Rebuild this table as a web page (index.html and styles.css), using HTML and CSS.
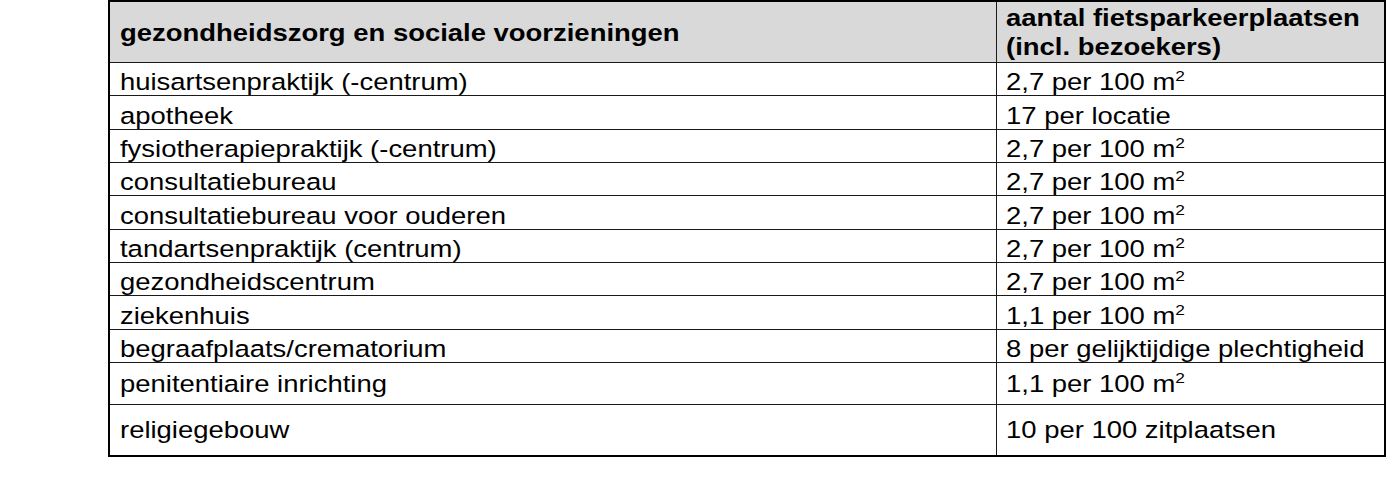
FILE: index.html
```html
<!DOCTYPE html>
<html lang="nl">
<head>
<meta charset="utf-8">
<title>Fietsparkeerplaatsen</title>
<link rel="stylesheet" href="styles.css">
</head>
<body>
<table class="norm">
  <thead>
    <tr class="head">
      <th class="c1"><span class="t">gezondheidszorg en sociale voorzieningen</span></th>
      <th class="c2"><span class="t">aantal fietsparkeerplaatsen<br>(incl. bezoekers)</span></th>
    </tr>
  </thead>
  <tbody>
    <tr class="row"><td><span class="t">huisartsenpraktijk (-centrum)</span></td><td><span class="t">2,7 per 100 m<sup>2</sup></span></td></tr>
    <tr class="row"><td><span class="t">apotheek</span></td><td><span class="t">17 per locatie</span></td></tr>
    <tr class="row"><td><span class="t">fysiotherapiepraktijk (-centrum)</span></td><td><span class="t">2,7 per 100 m<sup>2</sup></span></td></tr>
    <tr class="row"><td><span class="t">consultatiebureau</span></td><td><span class="t">2,7 per 100 m<sup>2</sup></span></td></tr>
    <tr class="row"><td><span class="t">consultatiebureau voor ouderen</span></td><td><span class="t">2,7 per 100 m<sup>2</sup></span></td></tr>
    <tr class="row"><td><span class="t">tandartsenpraktijk (centrum)</span></td><td><span class="t">2,7 per 100 m<sup>2</sup></span></td></tr>
    <tr class="row"><td><span class="t">gezondheidscentrum</span></td><td><span class="t">2,7 per 100 m<sup>2</sup></span></td></tr>
    <tr class="row"><td><span class="t">ziekenhuis</span></td><td><span class="t">1,1 per 100 m<sup>2</sup></span></td></tr>
    <tr class="row"><td><span class="t">begraafplaats/crematorium</span></td><td><span class="t">8 per gelijktijdige plechtigheid</span></td></tr>
    <tr class="row mid"><td><span class="t">penitentiaire inrichting</span></td><td><span class="t">1,1 per 100 m<sup>2</sup></span></td></tr>
    <tr class="row tall"><td><span class="t">religiegebouw</span></td><td><span class="t">10 per 100 zitplaatsen</span></td></tr>
  </tbody>
</table>
</body>
</html>
```

FILE: styles.css
```css
html, body {
  margin: 0;
  padding: 0;
  background: #ffffff;
}

body {
  font-family: "Liberation Sans", Arial, sans-serif;
  color: #000000;
}

.norm {
  margin-left: 108px;
  width: 1278px;
  border-collapse: collapse;
  border: 2px solid #000;
  table-layout: fixed;
  font-size: 24.5px;
  line-height: 27px;
}

.norm th,
.norm td {
  border: 1px solid #1a1a1a;
  text-align: left;
  vertical-align: middle;
  padding: 0 8px 0 10px;
  white-space: nowrap;
  overflow: visible;
}

.t {
  display: inline-block;
  transform: scaleX(1.12);
  transform-origin: 0 50%;
}

.norm .c1 {
  width: 868px;
}

.head th {
  background: #d9d9d9;
  font-weight: bold;
  height: 60px;
  line-height: 29px;
}

.head .c2 {
  padding-left: 9px;
}

.row td {
  height: 27px;
  padding-top: 5.33px;
}

.row td + td {
  padding-left: 9px;
}

.mid td {
  height: 41px;
  padding-top: 0;
}

.tall td {
  height: 50px;
  padding-top: 0;
}

.norm sup {
  font-size: 15.5px;
  line-height: 0;
  vertical-align: 9px;
}
```
